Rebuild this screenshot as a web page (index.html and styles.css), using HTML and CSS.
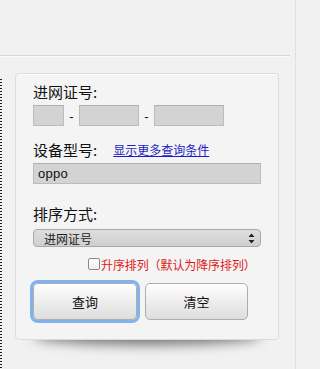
FILE: index.html
```html
<!DOCTYPE html>
<html lang="zh">
<head>
<meta charset="utf-8">
<link rel="stylesheet" href="styles.css">
</head>
<body>
<div class="page">
  <div class="top"></div>
  <div class="main">
    <div class="rail"></div>
    <div class="panel-wrap">
      <div class="panel">
        <div class="label">进网证号:</div>
        <div class="code-row">
          <span class="field f1"></span>
          <span class="dash">-</span>
          <span class="field f2"></span>
          <span class="dash">-</span>
          <span class="field f3"></span>
        </div>
        <div class="label l2">设备型号:<a class="more" href="#">显示更多查询条件</a></div>
        <div class="field wide">oppo</div>
        <div class="label l3">排序方式:</div>
        <div class="select">
          <span>进网证号</span>
          <svg class="arrows" width="7" height="11" viewBox="0 0 7 11"><path d="M3.5 0.5 L6.5 4 L0.5 4 Z M3.5 10.5 L6.5 7 L0.5 7 Z" fill="#222"/></svg>
        </div>
        <div class="check-row">
          <span class="box"></span>
          <span class="asc">升序排列（默认为降序排列）</span>
        </div>
        <div class="buttons">
          <button class="btn focus">查询</button>
          <button class="btn">清空</button>
        </div>
      </div>
    </div>
  </div>
</div>
</body>
</html>
```
FILE: styles.css
```css
html, body {
  margin: 0;
  padding: 0;
  background: #f1f1f1;
}
body {
  font-family: "Noto Sans CJK SC", "Liberation Sans", sans-serif;
  color: #111;
}
.page {
  width: 295px;
  height: 369px;
  border-right: 1px solid #e0e0e0;
  overflow: hidden;
}
.top {
  height: 55px;
  margin-right: 5px;
  border-bottom: 1px solid #d6d6d6;
  box-shadow: 0 1px 0 #fbfbfb;
}
.main {
  display: flex;
  align-items: flex-start;
  padding-top: 17px;
}
.rail {
  width: 2px;
  height: 320px;
  margin-top: 6px;
  background: repeating-linear-gradient(to bottom, #222 0, #222 1px, transparent 1px, transparent 3px);
}
.panel-wrap {
  position: relative;
  margin-left: 13px;
  width: 264px;
}
.panel-wrap::before {
  content: "";
  position: absolute;
  left: 18px;
  right: 18px;
  bottom: 5px;
  height: 18px;
  border-radius: 50%;
  box-shadow: 0 10px 12px rgba(0, 0, 0, 0.5);
  z-index: 0;
}
.panel {
  position: relative;
  z-index: 1;
  box-sizing: border-box;
  height: 267px;
  padding: 9px 17px 0;
  background: #f4f4f4;
  border: 1px solid #dcdcdc;
  border-radius: 4px;
  box-shadow: inset 0 1px 0 #fff;
}
.label {
  font-size: 15px;
  line-height: 18px;
  height: 18px;
  white-space: nowrap;
}
.l2 { margin-top: 15px; display: flex; align-items: center; }
.l3 { margin-top: 21px; }
.more {
  margin-left: 16px;
  font-size: 12px;
  color: #1d1dc4;
  text-decoration: underline;
}
.code-row {
  display: flex;
  align-items: center;
  margin-top: 4px;
  height: 21px;
}
.field {
  box-sizing: border-box;
  display: block;
  height: 21px;
  background: #d3d3d3;
  border: 1px solid #bcbcbc;
  border-top-color: #b0b0b0;
}
.f1 { width: 31px; }
.f2 { width: 60px; }
.f3 { width: 70px; }
.dash {
  width: 15px;
  text-align: center;
  font-family: "Liberation Sans", sans-serif;
  font-size: 13px;
  line-height: 21px;
  padding-top: 2px;
}
.wide {
  width: 228px;
  margin-top: 4px;
  padding-left: 4px;
  font-family: "Liberation Sans", sans-serif;
  font-size: 13px;
  line-height: 19px;
  letter-spacing: 0.3px;
  color: #111;
}
.select {
  box-sizing: border-box;
  margin-top: 6px;
  width: 228px;
  height: 18px;
  display: flex;
  align-items: center;
  justify-content: space-between;
  padding: 0 5px 0 10px;
  border: 1px solid #a9a9a9;
  border-radius: 4px;
  background: linear-gradient(#dedede, #cfcfcf);
  font-size: 12px;
  color: #222;
}
.arrows { display: block; }
.check-row {
  display: flex;
  align-items: center;
  margin-top: 10px;
  margin-left: 55px;
  height: 14px;
}
.box {
  box-sizing: border-box;
  width: 12px;
  height: 12px;
  border: 1px solid #8a8a8a;
  border-radius: 2px;
  background: linear-gradient(#fff, #eee);
}
.asc {
  margin-left: 1px;
  font-size: 12px;
  color: #e01818;
  white-space: nowrap;
  letter-spacing: -0.1px;
}
.buttons {
  display: flex;
  gap: 8px;
  margin-top: 12px;
}
.btn {
  box-sizing: border-box;
  width: 104px;
  height: 37px;
  margin: 0;
  padding: 0;
  border: 1px solid #adadad;
  border-radius: 5px;
  background: linear-gradient(#fefefe, #ececec 55%, #dedede);
  font-family: "Noto Sans CJK SC", sans-serif;
  font-size: 13px;
  color: #111;
}
.btn + .btn { width: 103px; }
.focus {
  box-shadow: 0 0 0 3px #80b3ec;
}
```
